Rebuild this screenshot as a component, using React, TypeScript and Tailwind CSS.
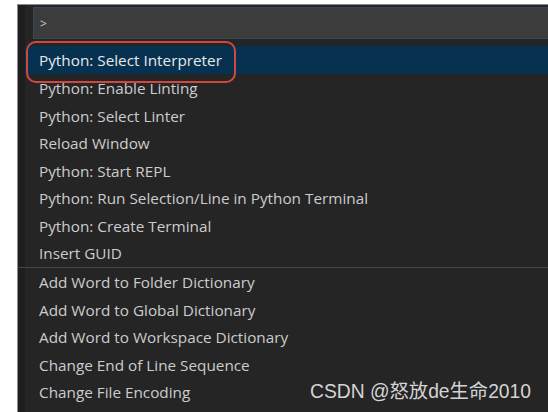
import React from "react";

const commands = [
  "Python: Select Interpreter",
  "Python: Enable Linting",
  "Python: Select Linter",
  "Reload Window",
  "Python: Start REPL",
  "Python: Run Selection/Line in Python Terminal",
  "Python: Create Terminal",
  "Insert GUID",
];

const others = [
  "Add Word to Folder Dictionary",
  "Add Word to Global Dictionary",
  "Add Word to Workspace Dictionary",
  "Change End of Line Sequence",
  "Change File Encoding",
];

const font = { fontFamily: '"Open Sans", "Noto Sans", sans-serif' };

const Row = ({ label, active }: { label: string; active?: boolean }) => (
  <div
    className={`h-[27.6px] flex items-center pl-[14px] pt-[2px] text-[15.3px] ${
      active ? "bg-[#073150] text-[#e8e8e8]" : "text-[#cccccc]"
    }`}
  >
    {label}
  </div>
);

export default function App() {
  return (
    <div className="relative w-[548px] h-[412px] bg-white pl-[17px] pt-[4px] overflow-hidden" style={font}>
      <div className="flex h-full bg-[#252526] border-t border-l border-[#8a8a8a]">
        <div className="w-[7px] bg-[#1e1e1e]" />
        <div className="flex-1 flex flex-col">
          <div className="h-[2px]" />
          <div className="ml-[8px] h-[32px] bg-[#3c3c3c] border border-r-0 border-[#34495e] flex items-center pl-[6px] pt-[2px] text-[12px] text-[#cccccc]">
            &gt;
          </div>
          <div className="h-[7px]" />
          {commands.map((c, i) => (
            <Row key={c} label={c} active={i === 0} />
          ))}
          <div className="ml-[-7px] h-px bg-[#454545]" />
          {others.map((c) => (
            <Row key={c} label={c} />
          ))}
        </div>
      </div>

      {/* annotation */}
      <div className="absolute left-[26px] top-[41px] w-[210px] h-[42px] rounded-[10px] border-2 border-[#d2483e]" />

      <div
        className="absolute left-[310px] top-[382px] text-[19.3px] leading-none text-[#d4d4d4]"
        style={{ fontFamily: '"Liberation Sans", "Noto Sans CJK SC", sans-serif' }}
      >
        CSDN @怒放de生命2010
      </div>
    </div>
  );
}
